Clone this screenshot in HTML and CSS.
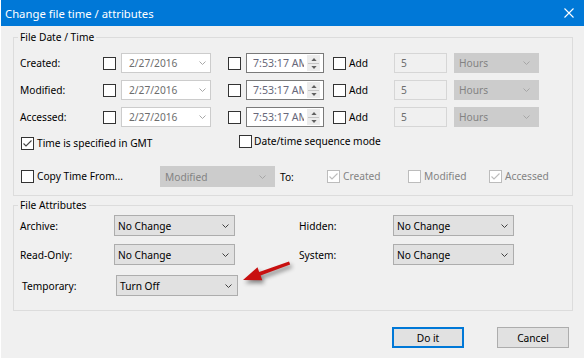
FILE: index.html
```html
<!DOCTYPE html>
<html>
<head>
    <meta charset="UTF-8">
    <title>Change file time / attributes</title>
    <link rel="stylesheet" href="styles.css">
</head>
<body>
<div class="window">
    <div class="titlebar">
        <span class="title">Change file time / attributes</span>
        <svg class="close" viewBox="0 0 10 10"><path d="M0.5 0.5 L9.5 9.5 M9.5 0.5 L0.5 9.5"/></svg>
    </div>
    <div class="content">
        <fieldset class="group dates">
            <legend>File Date / Time</legend>
            <div class="row">
                <span class="row-label">Created:</span>
                <span class="check"></span>
                <div class="field date">2/27/2016<svg class="chev" viewBox="0 0 7 4"><path d="M0.5 0.5 L3.5 3.5 L6.5 0.5"/></svg></div>
                <span class="check time-check"></span>
                <div class="field time"><span class="time-text">7:53:17 AM</span><span class="spin"><svg viewBox="0 0 7 4"><path d="M0 4 L3.5 0 L7 4Z"/></svg><i></i><svg viewBox="0 0 7 4"><path d="M0 0 L3.5 4 L7 0Z"/></svg></span></div>
                <span class="add"><span class="check"></span>Add</span>
                <div class="field amount">5</div>
                <div class="field combo off">Hours<svg class="chev" viewBox="0 0 7 4"><path d="M0.5 0.5 L3.5 3.5 L6.5 0.5"/></svg></div>
            </div>
            <div class="row">
                <span class="row-label">Modified:</span>
                <span class="check"></span>
                <div class="field date">2/27/2016<svg class="chev" viewBox="0 0 7 4"><path d="M0.5 0.5 L3.5 3.5 L6.5 0.5"/></svg></div>
                <span class="check time-check"></span>
                <div class="field time"><span class="time-text">7:53:17 AM</span><span class="spin"><svg viewBox="0 0 7 4"><path d="M0 4 L3.5 0 L7 4Z"/></svg><i></i><svg viewBox="0 0 7 4"><path d="M0 0 L3.5 4 L7 0Z"/></svg></span></div>
                <span class="add"><span class="check"></span>Add</span>
                <div class="field amount">5</div>
                <div class="field combo off">Hours<svg class="chev" viewBox="0 0 7 4"><path d="M0.5 0.5 L3.5 3.5 L6.5 0.5"/></svg></div>
            </div>
            <div class="row">
                <span class="row-label">Accessed:</span>
                <span class="check"></span>
                <div class="field date">2/27/2016<svg class="chev" viewBox="0 0 7 4"><path d="M0.5 0.5 L3.5 3.5 L6.5 0.5"/></svg></div>
                <span class="check time-check"></span>
                <div class="field time"><span class="time-text">7:53:17 AM</span><span class="spin"><svg viewBox="0 0 7 4"><path d="M0 4 L3.5 0 L7 4Z"/></svg><i></i><svg viewBox="0 0 7 4"><path d="M0 0 L3.5 4 L7 0Z"/></svg></span></div>
                <span class="add"><span class="check"></span>Add</span>
                <div class="field amount">5</div>
                <div class="field combo off">Hours<svg class="chev" viewBox="0 0 7 4"><path d="M0.5 0.5 L3.5 3.5 L6.5 0.5"/></svg></div>
            </div>
            <div class="option-row">
                <span class="opt gmt"><span class="check"><svg viewBox="0 0 11 11"><path d="M1.5 5.5 L4 8 L9.5 2.5"/></svg></span>Time is specified in GMT</span>
                <span class="opt seq"><span class="check"></span>Date/time sequence mode</span>
            </div>
            <div class="copy-row">
                <span class="opt copy-from"><span class="check"></span>Copy Time From...</span>
                <div class="field combo off copy-combo">Modified<svg class="chev" viewBox="0 0 7 4"><path d="M0.5 0.5 L3.5 3.5 L6.5 0.5"/></svg></div>
                <span class="to">To:</span>
                <span class="opt target"><span class="check off"><svg viewBox="0 0 11 11"><path d="M1.5 5.5 L4 8 L9.5 2.5"/></svg></span>Created</span>
                <span class="opt target"><span class="check off"></span>Modified</span>
                <span class="opt target"><span class="check off"><svg viewBox="0 0 11 11"><path d="M1.5 5.5 L4 8 L9.5 2.5"/></svg></span>Accessed</span>
            </div>
        </fieldset>
        <fieldset class="group attrs">
            <legend>File Attributes</legend>
            <div class="attr-row">
                <span class="attr-label">Archive:</span>
                <div class="select">No Change<svg class="chev" viewBox="0 0 7 4"><path d="M0.5 0.5 L3.5 3.5 L6.5 0.5"/></svg></div>
                <span class="attr-label right">Hidden:</span>
                <div class="select">No Change<svg class="chev" viewBox="0 0 7 4"><path d="M0.5 0.5 L3.5 3.5 L6.5 0.5"/></svg></div>
            </div>
            <div class="attr-row">
                <span class="attr-label">Read-Only:</span>
                <div class="select">No Change<svg class="chev" viewBox="0 0 7 4"><path d="M0.5 0.5 L3.5 3.5 L6.5 0.5"/></svg></div>
                <span class="attr-label right">System:</span>
                <div class="select">No Change<svg class="chev" viewBox="0 0 7 4"><path d="M0.5 0.5 L3.5 3.5 L6.5 0.5"/></svg></div>
            </div>
            <div class="attr-row temp">
                <span class="attr-label">Temporary:</span>
                <div class="select">Turn Off<svg class="chev" viewBox="0 0 7 4"><path d="M0.5 0.5 L3.5 3.5 L6.5 0.5"/></svg></div>
            </div>
        </fieldset>
        <div class="buttons">
            <div class="btn default">Do it</div>
            <div class="btn">Cancel</div>
        </div>
    </div>
    <svg class="arrow" viewBox="0 0 60 40"><path d="M7 25 L21.5 12.2 L23.2 16.9 L53 6.6 L54.2 9.6 L24.6 20.6 L26.3 25.3 Z"/></svg>
</div>
</body>
</html>
```

FILE: styles.css
```css
body {
    margin: 0;
    background-color: #fff;
    font-family: "Noto Sans", sans-serif;
    font-size: 10.2px;
    color: #000;
}
.window {
    position: relative;
    margin-left: 1px;
    width: 583px;
    height: 358px;
    background-color: #f0f0f0;
}
.titlebar {
    height: 26px;
    background-color: #0078d7;
    color: #fff;
    display: flex;
    align-items: center;
    justify-content: space-between;
    padding: 0 10px 0 4px;
}
.title {
    font-size: 11.3px;
}
.close {
    width: 10px;
    height: 10px;
    stroke: #fff;
    stroke-width: 1.1;
    fill: none;
}
.content {
    padding: 3px 11px 0 12px;
}
.group {
    margin: 0;
    padding: 8px 0 8px 6px;
    border: 1px solid #dcdcdc;
    min-width: 0;
}
.group legend {
    margin-left: -2px;
    padding: 0 2px;
    line-height: 16px;
}
.attrs {
    margin-top: 1px;
    padding-top: 2px;
    padding-bottom: 14px;
}
.check {
    width: 13px;
    height: 13px;
    box-sizing: border-box;
    border: 1px solid #333;
    background-color: #fff;
    flex: none;
    display: flex;
}
.check svg {
    width: 11px;
    height: 11px;
    stroke: #444;
    stroke-width: 1.1;
    fill: none;
}
.check.off {
    border-color: #bcbcbc;
}
.check.off svg {
    stroke: #bcbcbc;
}
.chev {
    width: 7px;
    height: 4px;
    stroke: currentColor;
    stroke-width: 1;
    fill: none;
    flex: none;
}

/* date rows */
.row {
    display: flex;
    align-items: center;
    height: 20px;
}
.row + .row {
    margin-top: 7px;
}
.row-label {
    width: 83px;
}
.field {
    height: 20px;
    box-sizing: border-box;
    border: 1px solid #cccccc;
    background-color: #fff;
    display: flex;
    align-items: center;
    color: #6d6d6d;
    flex: none;
}
.date {
    margin-left: 5px;
    width: 90px;
    padding: 0 4px 0 7px;
    justify-content: space-between;
}
.date .chev {
    color: #a8a8a8;
}
.time-check {
    margin-left: 17px;
}
.time {
    margin-left: 5px;
    width: 78px;
    border-color: #7a7a7a;
    padding-left: 6px;
}
.time-text {
    width: 51px;
    overflow: hidden;
    white-space: nowrap;
    color: #68687a;
    font-size: 10.6px;
}
.spin {
    margin-left: auto;
    margin-right: 3px;
    width: 13px;
    height: 16px;
    background-color: #ececec;
    display: flex;
    flex-direction: column;
    align-items: center;
    justify-content: center;
    gap: 1px;
}
.spin svg {
    width: 6px;
    height: 3px;
    fill: #606060;
}
.spin i {
    width: 11px;
    height: 1px;
    background-color: #c4c4c4;
    margin: 1px 0;
}
.add {
    margin-left: 9px;
    width: 61px;
    display: flex;
    align-items: center;
    gap: 3px;
}
.amount {
    width: 53px;
    padding-left: 6px;
    background-color: #f0f0f0;
    border-color: #d6d6d6;
}
.combo.off {
    margin-left: 7px;
    width: 85px;
    padding: 0 8px 0 4px;
    justify-content: space-between;
    background-color: #cccccc;
    border-color: #cccccc;
    color: #838383;
}
.combo.off .chev {
    color: #a6a6a6;
}

/* options */
.option-row {
    display: flex;
    align-items: flex-start;
    height: 16px;
    margin-top: 7px;
}
.opt {
    display: flex;
    align-items: center;
    gap: 3px;
    line-height: 13px;
}
.gmt {
    margin-left: 1px;
    margin-top: 3px;
    width: 218px;
}
.seq {
    margin-top: 1px;
    gap: 2px;
}
.copy-row {
    display: flex;
    align-items: center;
    height: 21px;
    margin-top: 16px;
}
.copy-from {
    margin-left: 1px;
    width: 139px;
}
.combo.off.copy-combo {
    margin-left: 0;
    height: 21px;
    width: 115px;
}
.to {
    margin-left: 5px;
    width: 47px;
}
.target {
    width: 81px;
    color: #838383;
}

/* attributes */
.attr-row {
    display: flex;
    align-items: center;
    height: 21px;
}
.attr-row + .attr-row {
    margin-top: 8px;
}
.attr-row.temp {
    margin-top: 10px;
    padding-left: 1px;
}
.attr-label {
    width: 94px;
}
.attr-row.temp .attr-label {
    padding-left: 1px;
}
.attr-label.right {
    margin-left: 64px;
}
.select {
    width: 121px;
    height: 21px;
    box-sizing: border-box;
    border: 1px solid #adadad;
    background-color: #e1e1e1;
    padding: 0 5px 0 3px;
    display: flex;
    align-items: center;
    justify-content: space-between;
}
.select .chev {
    color: #404040;
}
.temp .select {
    width: 122px;
}

/* buttons */
.buttons {
    display: flex;
    justify-content: flex-end;
    gap: 33px;
    margin-top: 16px;
    padding-right: 4px;
}
.btn {
    width: 72px;
    height: 21px;
    box-sizing: border-box;
    border: 1px solid #adadad;
    background-color: #e1e1e1;
    display: flex;
    align-items: center;
    justify-content: center;
}
.btn.default {
    border: 2px solid #0078d7;
}

.arrow {
    position: absolute;
    left: 235px;
    top: 255px;
    width: 60px;
    height: 40px;
    fill: #c81010;
    filter: drop-shadow(2px 3px 2px rgba(0, 0, 0, 0.45));
}
```
